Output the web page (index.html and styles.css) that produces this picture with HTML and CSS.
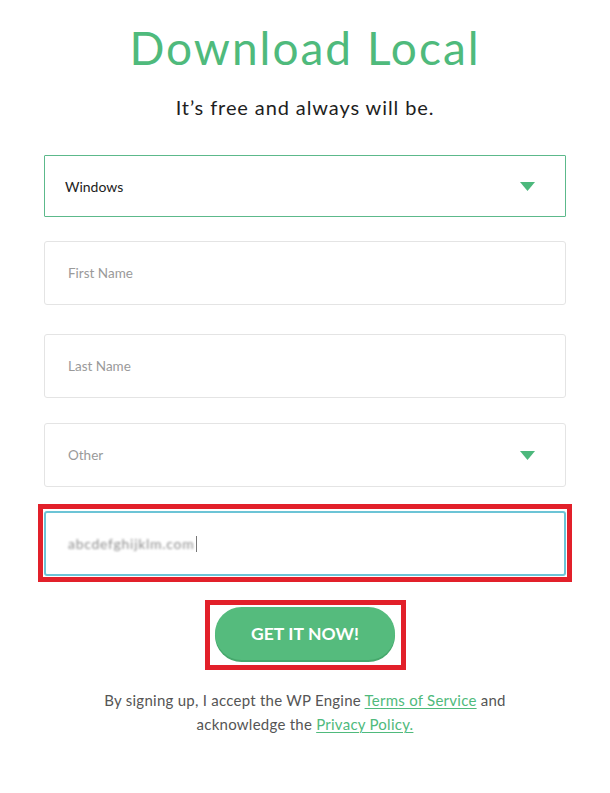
FILE: index.html
```html
<!DOCTYPE html>
<html lang="en">
<head>
<meta charset="utf-8">
<title>Download Local</title>
<link rel="stylesheet" href="styles.css">
</head>
<body>
<main class="page">
  <h1 class="title">Download Local</h1>
  <p class="subtitle">It’s free and always will be.</p>
  <form class="form">
    <div class="field field-select field-active">
      <span class="value">Windows</span>
      <svg class="caret" width="15" height="9" viewBox="0 0 15 9"><path d="M0 0H15L7.5 9Z" fill="#4cb87c"/></svg>
    </div>
    <div class="field field-first"><span class="placeholder">First Name</span></div>
    <div class="field field-last"><span class="placeholder">Last Name</span></div>
    <div class="field field-select field-other">
      <span class="placeholder">Other</span>
      <svg class="caret" width="15" height="9" viewBox="0 0 15 9"><path d="M0 0H15L7.5 9Z" fill="#4cb87c"/></svg>
    </div>
    <div class="highlight highlight-email">
      <div class="field field-email"><span class="blurred">abcdefghijklm.com</span><span class="cursor"></span></div>
    </div>
    <div class="button-row">
      <div class="highlight highlight-button">
        <button type="button" class="cta">GET IT NOW!</button>
      </div>
    </div>
  </form>
  <p class="legal">By signing up, I accept the WP Engine <a href="#">Terms of Service</a> and<br>acknowledge the <a href="#">Privacy Policy.</a></p>
</main>
</body>
</html>
```
FILE: styles.css
```css
* { box-sizing: border-box; }
html, body { margin: 0; padding: 0; background: #fff; }
body { font-family: Lato, "Open Sans", sans-serif; color: #222; }

.page {
  width: 522px;
  margin: 0 auto;
  padding-top: 20px;
}

.title {
  margin: 0;
  font-size: 46px;
  line-height: 55px;
  font-weight: 400;
  color: #4fba7c;
  text-align: center;
  letter-spacing: 2px;
}

.subtitle {
  margin: 20px 0 0;
  font-size: 20px;
  line-height: 24px;
  text-align: center;
  color: #1e1e1e;
  letter-spacing: 0.9px;
}

.form {
  display: flex;
  flex-direction: column;
  margin-top: 36px;
}

.field {
  display: flex;
  align-items: center;
  justify-content: space-between;
  height: 64px;
  border: 1px solid #e4e4e4;
  border-radius: 3px;
  padding: 0 30px 0 23px;
  font-size: 13.5px;
  background: #fff;
}

.field-active {
  height: 62px;
  border-color: #5cb98b;
  border-radius: 1px;
  padding-left: 20px;
}

.field-active .value { color: #222; font-size: 14px; }

.field-first { margin-top: 24px; }
.field-last { margin-top: 29px; }
.field-other { margin-top: 25px; }

.placeholder { color: #9a9a9a; }

.caret { display: block; }

.highlight {
  border: 5px solid #e2202a;
}

.highlight-email {
  margin: 17px -6px 0;
  padding: 2px 1px 1px;
}

.field-email {
  height: 65px;
  border: 2px solid #6cc4d6;
  border-radius: 3px;
  justify-content: flex-start;
  padding-left: 22px;
}

.blurred {
  color: #8f8f8f;
  font-size: 14px;
  letter-spacing: 0.7px;
  filter: blur(0.9px);
}

.cursor {
  width: 1px;
  height: 16px;
  background: #777;
  margin-left: 2px;
  filter: blur(0.4px);
}

.button-row {
  display: flex;
  justify-content: center;
  margin-top: 18px;
}

.highlight-button {
  padding: 2px 6px 2px 5px;
  margin-left: 1px;
}

.cta {
  display: block;
  width: 180px;
  height: 53px;
  border: none;
  border-radius: 27px;
  background: #55bb7d;
  box-shadow: 0 2px 0 #46a86c;
  color: #fff;
  font-family: Lato, sans-serif;
  font-weight: 700;
  font-size: 17.5px;
  letter-spacing: 0.1px;
  margin-bottom: 3px;
  cursor: pointer;
}

.legal {
  margin: 18px -20px 0;
  font-size: 15px;
  line-height: 24px;
  text-align: center;
  color: #555;
  letter-spacing: 0.25px;
}

.legal a {
  color: #4fba7c;
  text-decoration: underline;
  text-underline-offset: 2px;
  text-decoration-thickness: 1px;
}
```
